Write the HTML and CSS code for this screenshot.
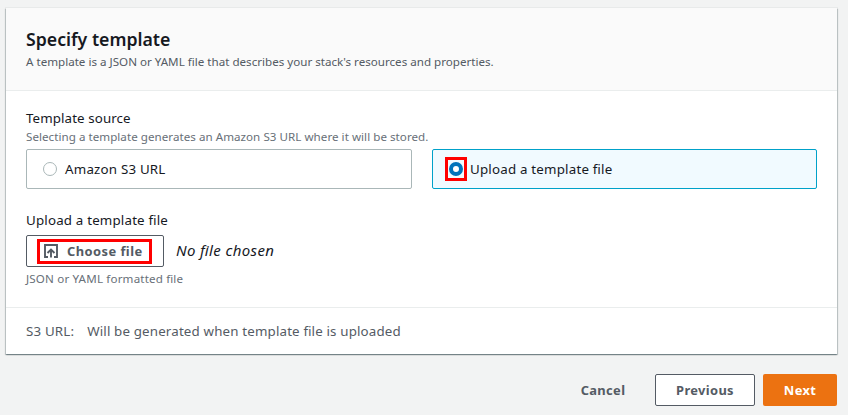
FILE: index.html
```html
<!DOCTYPE html>
<html lang="en">
<head>
<meta charset="utf-8">
<title>Specify template</title>
<link rel="stylesheet" href="styles.css">
</head>
<body>
<main class="page">
  <section class="card">
    <header class="card-header">
      <h2>Specify template</h2>
      <p>A template is a JSON or YAML file that describes your stack's resources and properties.</p>
    </header>
    <div class="card-body">
      <div class="label">Template source</div>
      <div class="hint">Selecting a template generates an Amazon S3 URL where it will be stored.</div>
      <div class="tiles">
        <div class="tile"><span class="mark"><span class="radio"></span></span><span>Amazon S3 URL</span></div>
        <div class="tile selected"><span class="mark highlight"><span class="radio checked"></span></span><span>Upload a template file</span></div>
      </div>
      <div class="label upload-label">Upload a template file</div>
      <div class="upload">
        <div class="file-button"><span class="file-highlight">
          <svg class="icon" viewBox="0 0 16 16" width="16" height="16"><path d="M5 14H2V2h12v12h-3M8 14.5V6.5M4.5 10L8 6.5l3.5 3.5" fill="none" stroke="#545b64" stroke-width="1.9"/></svg>
          <span class="file-text">Choose file</span></span></div>
        <em class="no-file">No file chosen</em>
      </div>
      <div class="hint format">JSON or YAML formatted file</div>
    </div>
    <footer class="card-footer"><span>S3 URL:</span><span>Will be generated when template file is uploaded</span></footer>
  </section>
  <div class="actions">
    <div class="btn link">Cancel</div>
    <div class="btn normal">Previous</div>
    <div class="btn primary">Next</div>
  </div>
</main>
</body>
</html>
```
FILE: styles.css
```css
* { box-sizing: border-box; }
body { margin: 0; background: #f2f3f3; color: #16191f; font: 13.33px/20px "Noto Sans", sans-serif; letter-spacing: .16px; font-feature-settings: "liga" 1; }
.page { padding: 8px 11px 0 6px; }
.card { background: #fff; height: 346px; box-shadow: 0 1px 1px 0 rgba(0,28,36,.3), 1px 1px 1px 0 rgba(0,28,36,.15), -1px 1px 1px 0 rgba(0,28,36,.15), 0 0 0 1px rgba(0,28,36,.04); }
.card-header { height: 83px; padding: 19px 20px 0; background: #fafafa; border-bottom: 1px solid #eaeded; }
h2 { margin: 0; font-size: 17.7px; line-height: 24px; font-weight: 600; letter-spacing: 0; }
p { margin: 1px 0 0; font-size: 11.62px; line-height: 20px; letter-spacing: 0; color: #545b64; }
.card-body { height: 216px; padding: 18px 20px 0; }
.label { height: 19px; line-height: 19px; letter-spacing: .1px; }
.hint { font-size: 11.6px; line-height: 18px; height: 21px; letter-spacing: .04px; color: #687078; }
.tiles { display: grid; grid-template-columns: 386px 385px; gap: 20px; }
.tile { display: flex; align-items: center; height: 40px; padding-left: 12px; border: 1px solid #aab7b8; border-radius: 2px; letter-spacing: .2px; }
.tile.selected { border-color: #00a1c9; background: #f1faff; }
.mark { width: 22px; height: 24px; margin-right: 4px; display: flex; align-items: center; justify-content: center; }
.highlight { border: 3px solid #f00; margin-right: 3px; }
.radio { width: 14px; height: 14px; border: 1px solid #aab7b8; border-radius: 50%; background: #fff; flex: none; }
.radio.checked { border: 4px solid #0073bb; }
.upload-label { margin-top: 22px; letter-spacing: .18px; }
.upload { display: flex; margin-top: 5px; height: 32px; }
.file-button { width: 138px; height: 32px; border: 1px solid #545b64; border-radius: 2px; padding: 3px 0 0 10px; }
.file-highlight { width: 115px; height: 25px; border: 3px solid #f00; display: flex; align-items: center; padding-left: 3px; font-size: 12.9px; letter-spacing: .45px; font-feature-settings: normal; font-weight: 700; color: #545b64; }
.file-text { padding-bottom: 2px; }
.icon { margin: 0 8px 2px 0; }
.no-file { margin-left: 12px; font-size: 15px; letter-spacing: .38px; line-height: 31px; }
.format { margin-top: 3px; letter-spacing: .17px; }
.card-footer { display: flex; gap: 13px; height: 47px; padding: 13px 20px 0; border-top: 1px solid #eaeded; color: #545b64; }
.actions { display: flex; justify-content: flex-end; margin-top: 20px; gap: 8px; font-size: 12.9px; letter-spacing: .35px; font-weight: 700; color: #545b64; }
.btn { height: 32px; line-height: 32px; text-align: center; border-radius: 2px; }
.link { width: 88px; }
.normal { width: 100px; line-height: 30px; border: 1px solid #545b64; background: #fff; }
.primary { width: 74px; background: #ec7211; color: #fff; }
```
